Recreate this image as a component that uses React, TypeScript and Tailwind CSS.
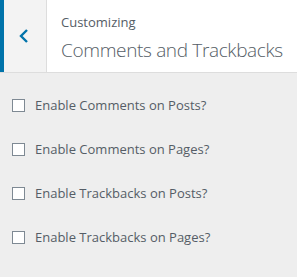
import React from "react";

const options = [
  "Enable Comments on Posts?",
  "Enable Comments on Pages?",
  "Enable Trackbacks on Posts?",
  "Enable Trackbacks on Pages?",
];

export default function App() {
  return (
    <div className="h-[277px] w-[297px] overflow-hidden bg-[#eeeeee] font-['Open_Sans',sans-serif] text-[#555d66]">
      {/* header */}
      <div className="flex h-[73px] border-b border-[#dddddd] bg-white">
        <button className="flex h-full w-[47px] shrink-0 items-center justify-center border-l-[4px] border-r border-l-[#0073aa] border-r-[#dddddd] bg-[#f3f3f3] pr-[2px] text-[#0073aa]">
          <svg width="12" height="16" viewBox="0 0 12 16" fill="none">
            <path d="M9 2 L3 8 L9 14" stroke="currentColor" strokeWidth="2.4" />
          </svg>
        </button>
        <div className="flex flex-col pl-[14px] pt-[13px]">
          <span className="text-[13px] leading-[18px] text-[#555d66]">Customizing</span>
          <span className="mt-[6px] whitespace-nowrap text-[19px] font-light leading-[26px] tracking-[-0.35px] text-[#555d66]">
            Comments and Trackbacks
          </span>
        </div>
      </div>

      {/* options */}
      <div className="flex flex-col gap-[20px] px-[12px] pt-[20px]">
        {options.map((label) => (
          <label key={label} className="flex h-[24px] items-center gap-[10px]">
            <span className="h-[13px] w-[13px] shrink-0 border border-[#7e8993] bg-white" />
            <span className="text-[13px] leading-[24px]">{label}</span>
          </label>
        ))}
      </div>
    </div>
  );
}
